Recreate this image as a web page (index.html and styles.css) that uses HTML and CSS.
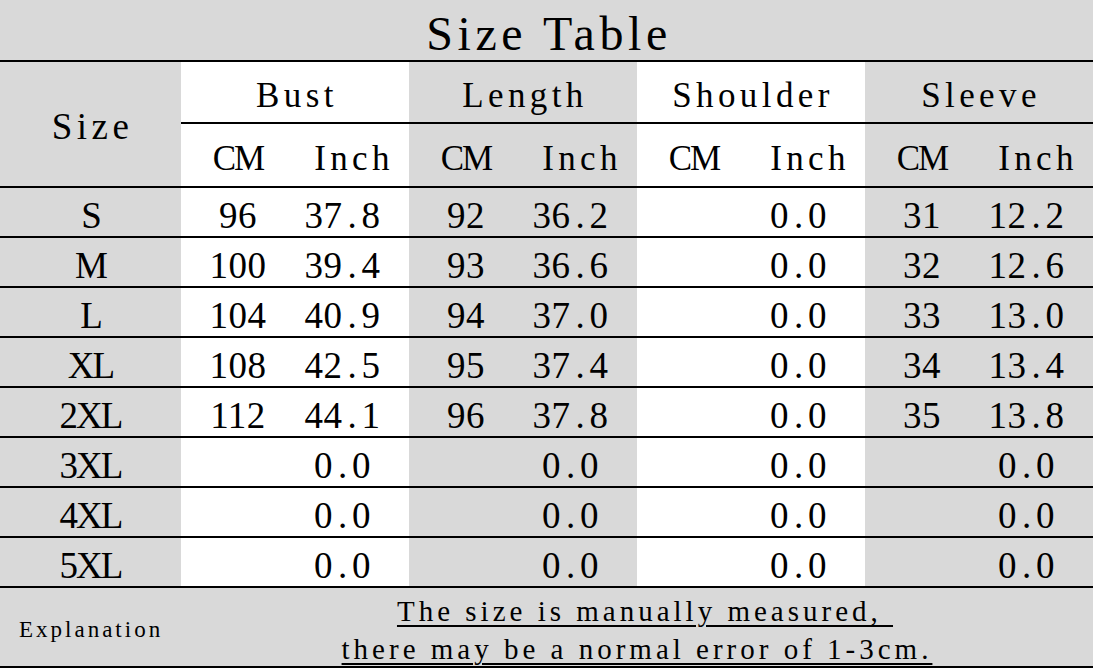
FILE: index.html
```html
<!DOCTYPE html>
<html lang="en">
<head>
<meta charset="utf-8">
<title>Size Table</title>
<link rel="stylesheet" href="styles.css">
</head>
<body>
<div class="sheet">
  <div class="title">Size Table</div>

  <div class="head">
    <div class="h-size g">Size</div>
    <div class="h-group w">Bust</div>
    <div class="h-group g">Length</div>
    <div class="h-group w">Shoulder</div>
    <div class="h-group g">Sleeve</div>
    <div class="h-unit cm w">CM</div><div class="h-unit w">Inch</div>
    <div class="h-unit cm g">CM</div><div class="h-unit g">Inch</div>
    <div class="h-unit cm w">CM</div><div class="h-unit w">Inch</div>
    <div class="h-unit cm g">CM</div><div class="h-unit g">Inch</div>
  </div>

  <div class="row">
    <div class="c size g">S</div>
    <div class="c w">96</div><div class="c in w">37<span class="dot">.</span>8</div>
    <div class="c g">92</div><div class="c in g">36<span class="dot">.</span>2</div>
    <div class="c w"></div><div class="c in w">0<span class="dot">.</span>0</div>
    <div class="c g">31</div><div class="c in g">12<span class="dot">.</span>2</div>
  </div>
  <div class="row">
    <div class="c size g">M</div>
    <div class="c w">100</div><div class="c in w">39<span class="dot">.</span>4</div>
    <div class="c g">93</div><div class="c in g">36<span class="dot">.</span>6</div>
    <div class="c w"></div><div class="c in w">0<span class="dot">.</span>0</div>
    <div class="c g">32</div><div class="c in g">12<span class="dot">.</span>6</div>
  </div>
  <div class="row">
    <div class="c size g">L</div>
    <div class="c w">104</div><div class="c in w">40<span class="dot">.</span>9</div>
    <div class="c g">94</div><div class="c in g">37<span class="dot">.</span>0</div>
    <div class="c w"></div><div class="c in w">0<span class="dot">.</span>0</div>
    <div class="c g">33</div><div class="c in g">13<span class="dot">.</span>0</div>
  </div>
  <div class="row">
    <div class="c size g">XL</div>
    <div class="c w">108</div><div class="c in w">42<span class="dot">.</span>5</div>
    <div class="c g">95</div><div class="c in g">37<span class="dot">.</span>4</div>
    <div class="c w"></div><div class="c in w">0<span class="dot">.</span>0</div>
    <div class="c g">34</div><div class="c in g">13<span class="dot">.</span>4</div>
  </div>
  <div class="row">
    <div class="c size g">2XL</div>
    <div class="c w">112</div><div class="c in w">44<span class="dot">.</span>1</div>
    <div class="c g">96</div><div class="c in g">37<span class="dot">.</span>8</div>
    <div class="c w"></div><div class="c in w">0<span class="dot">.</span>0</div>
    <div class="c g">35</div><div class="c in g">13<span class="dot">.</span>8</div>
  </div>
  <div class="row">
    <div class="c size g">3XL</div>
    <div class="c w"></div><div class="c in w">0<span class="dot">.</span>0</div>
    <div class="c g"></div><div class="c in g">0<span class="dot">.</span>0</div>
    <div class="c w"></div><div class="c in w">0<span class="dot">.</span>0</div>
    <div class="c g"></div><div class="c in g">0<span class="dot">.</span>0</div>
  </div>
  <div class="row">
    <div class="c size g">4XL</div>
    <div class="c w"></div><div class="c in w">0<span class="dot">.</span>0</div>
    <div class="c g"></div><div class="c in g">0<span class="dot">.</span>0</div>
    <div class="c w"></div><div class="c in w">0<span class="dot">.</span>0</div>
    <div class="c g"></div><div class="c in g">0<span class="dot">.</span>0</div>
  </div>
  <div class="row">
    <div class="c size g">5XL</div>
    <div class="c w"></div><div class="c in w">0<span class="dot">.</span>0</div>
    <div class="c g"></div><div class="c in g">0<span class="dot">.</span>0</div>
    <div class="c w"></div><div class="c in w">0<span class="dot">.</span>0</div>
    <div class="c g"></div><div class="c in g">0<span class="dot">.</span>0</div>
  </div>

  <div class="note">
    <div class="note-label">Explanation</div>
    <div class="note-text">
      <span class="note-line first">The size is manually measured,&nbsp;</span>
      <span class="note-line">there may be a normal error of 1-3cm.</span>
    </div>
  </div>
</div>
</body>
</html>
```

FILE: styles.css
```css
* {
  box-sizing: border-box;
}

html, body {
  margin: 0;
  padding: 0;
  background: #d9d9d9;
}

.sheet {
  width: 1093px;
  height: 668px;
  overflow: hidden;
  font-family: "Liberation Serif", "Times New Roman", serif;
  color: #000;
  background: #d9d9d9;
}

.g { background: #d9d9d9; }
.w { background: #ffffff; }

.title {
  height: 62px;
  border-bottom: 2px solid #000;
  padding-top: 8px;
  padding-left: 5px;
  font-size: 48px;
  line-height: 52px;
  letter-spacing: 4.6px;
  text-align: center;
}

.head {
  display: grid;
  grid-template-columns: 181px repeat(8, 114px);
  grid-template-rows: 62px 62px;
  border-bottom: 2px solid #000;
  height: 126px;
}

.h-size {
  grid-column: 1;
  grid-row: 1 / 3;
  padding-top: 6px;
  padding-left: 4px;
  font-size: 37px;
  line-height: 118px;
  letter-spacing: 4.5px;
  text-align: center;
}

.h-group {
  grid-column: span 2;
  border-bottom: 2px solid #000;
  padding-top: 8px;
  padding-left: 4px;
  font-size: 35px;
  line-height: 52px;
  letter-spacing: 4.4px;
  text-align: center;
}

.h-unit {
  padding-top: 8px;
  padding-left: 4px;
  font-size: 35px;
  line-height: 54px;
  letter-spacing: 4.3px;
  text-align: center;
}

.h-unit.cm {
  padding-left: 0;
  letter-spacing: -2px;
}

.row {
  display: grid;
  grid-template-columns: 181px repeat(8, 114px);
  height: 50px;
  border-bottom: 2px solid #000;
}

.c {
  padding-top: 7px;
  font-size: 37px;
  line-height: 41px;
  letter-spacing: 0.5px;
  text-align: center;
  white-space: nowrap;
}

.c.in {
  padding-right: 19px;
}

.c.size {
  letter-spacing: -2px;
}

.dot {
  display: inline-block;
  width: 19px;
  text-align: center;
  letter-spacing: 0;
}

.note {
  display: grid;
  grid-template-columns: 181px 1fr;
  height: 80px;
  border-bottom: 2px solid #000;
}

.note-label {
  padding-top: 6px;
  padding-left: 19px;
  font-size: 23px;
  line-height: 72px;
  letter-spacing: 3px;
  white-space: nowrap;
}

.note-text {
  display: flex;
  flex-direction: column;
  align-items: center;
  padding-top: 4px;
  font-size: 29px;
  line-height: 38px;
  letter-spacing: 4px;
}

.note-line {
  display: block;
  white-space: pre;
  text-decoration: underline;
  text-decoration-thickness: 2px;
  text-underline-offset: 4px;
}

.note-line.first {
  margin-left: 16px;
}
```
